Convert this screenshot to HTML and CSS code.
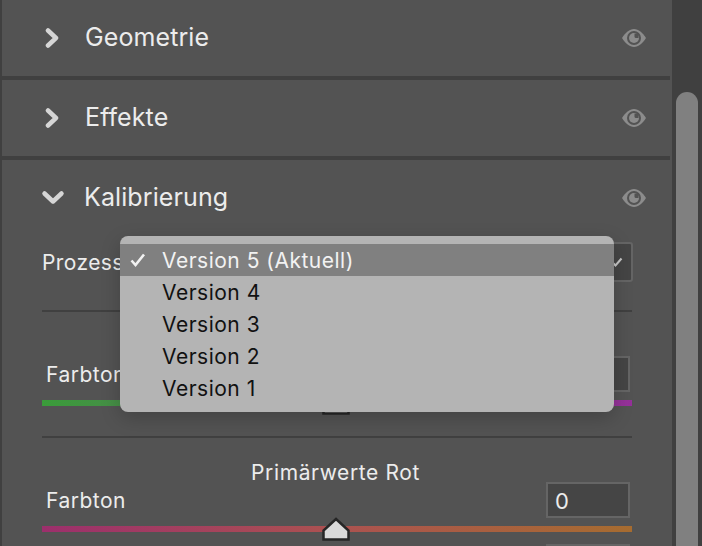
FILE: index.html
```html
<!DOCTYPE html>
<html lang="de">
<head>
<meta charset="utf-8">
<title>Kalibrierung</title>
<link rel="stylesheet" href="styles.css">
</head>
<body>
<div class="app">
  <main class="panel">
    <section class="section">
      <header class="head">
        <svg class="chev" width="16" height="22" viewBox="0 0 16 22"><path d="M3 3.5 11 11 3 18.5"/></svg>
        <h2 class="title">Geometrie</h2>
        <svg class="eye" width="26" height="20" viewBox="0 0 26 20"><use href="#eye"/></svg>
      </header>
    </section>
    <section class="section">
      <header class="head">
        <svg class="chev" width="16" height="22" viewBox="0 0 16 22"><path d="M3 3.5 11 11 3 18.5"/></svg>
        <h2 class="title">Effekte</h2>
        <svg class="eye" width="26" height="20" viewBox="0 0 26 20"><use href="#eye"/></svg>
      </header>
    </section>
    <section class="section open">
      <header class="head">
        <svg class="chev down" width="24" height="16" viewBox="0 0 24 16"><path d="M3.5 3.5 12 11.5 20.5 3.5"/></svg>
        <h2 class="title">Kalibrierung</h2>
        <svg class="eye" width="26" height="20" viewBox="0 0 26 20"><use href="#eye"/></svg>
      </header>
      <div class="body">
        <div class="process">
          <span class="label">Prozess</span>
          <div class="select"><svg width="12" height="10" viewBox="0 0 12 10"><path d="M1.5 5.5 4.5 8.5 10.5 1.5"/></svg></div>
        </div>
        <div class="group">
          <div class="group-title">Schatten</div>
          <div class="row"><span class="row-label">Farbton</span><span class="input">0</span></div>
          <div class="slider shadow-track"><svg class="thumb" width="28" height="24" viewBox="0 0 28 24"><use href="#thumb"/></svg></div>
        </div>
        <div class="group">
          <div class="group-title">Primärwerte Rot</div>
          <div class="row"><span class="row-label">Farbton</span><span class="input">0</span></div>
          <div class="slider red-track"><svg class="thumb" width="28" height="24" viewBox="0 0 28 24"><use href="#thumb"/></svg></div>
          <div class="row next"><span class="row-label"></span><span class="input"></span></div>
        </div>
      </div>
    </section>
  </main>
  <aside class="track"><div class="scroll-thumb"></div></aside>
</div>

<ul class="menu">
  <li class="item active"><svg class="tick" width="18" height="16" viewBox="0 0 18 16"><path d="M2.5 8.5 6.5 13 15 2.5"/></svg>Version 5 (Aktuell)</li>
  <li class="item">Version 4</li>
  <li class="item">Version 3</li>
  <li class="item">Version 2</li>
  <li class="item">Version 1</li>
</ul>

<svg class="defs" width="0" height="0" aria-hidden="true">
  <defs>
    <g id="eye">
      <path class="eye-lens" d="M1 10C4.500 4.500 8.500 1 13 1s8.500 3.500 12 9c-3.500 5.500-7.500 9-12 9S4.500 15.500 1 10Z"/>
      <circle class="eye-dark" cx="13" cy="10" r="7"/>
      <circle class="eye-lens" cx="13" cy="10" r="5"/>
      <path class="eye-dark" d="M13.500 5.500h4v4.500h-2.500a1.500 1.500 0 0 1-1.500-1.500Z"/>
    </g>
    <path id="thumb" class="thumb-shape" d="M14 2 26.500 13.500V22.500H1.500V13.500Z"/>
  </defs>
</svg>
</body>
</html>
```
FILE: styles.css
```css
* { box-sizing: border-box; }
html, body { margin: 0; height: 546px; overflow: hidden; }
body {
  position: relative;
  background: #404040;
  font-family: Inter, "Liberation Sans", sans-serif;
  color: #ececec;
}
.app { display: flex; height: 546px; overflow: hidden; }
.panel {
  height: 546px;
  margin-left: 2px;
  flex: none;
  width: 670px;
  background: #535353;
  overflow: hidden;
}
.section { margin-right: 2px; border-bottom: 4px solid #404040; height: 80px; }
.section.open { border-bottom: 0; height: auto; }
.head { display: flex; align-items: center; height: 76px; position: relative; }
.chev { margin-left: 43px; width: 16px; flex: none; }
.chev.down { margin-left: 39px; width: 24px; margin-right: -5px; }
.chev path { fill: none; stroke: #d6d6d6; stroke-width: 4.500; stroke-linecap: round; stroke-linejoin: round; }
.title { margin: 0 0 2px 24px; font-size: 25px; line-height: 30px; letter-spacing: 0.1px; font-weight: 400; color: #ececec; flex: 1; }
.eye { margin-right: 23px; flex: none; }
.eye-lens { fill: #8c8c8c; }
.eye-dark { fill: #535353; }
.body { padding: 0 38px 0 40px; }
.process { display: flex; align-items: center; justify-content: space-between; height: 42px; margin-top: 5px; }
.label { font-size: 21px; letter-spacing: 0.4px; }
.select {
  width: 120px;
  height: 40px;
  margin-right: -1px;
  display: flex;
  align-items: center;
  justify-content: flex-end;
  padding-right: 8px;
  background: #454545;
  border: 2px solid #656565;
  border-radius: 3px;
}
.select path { fill: none; stroke: #c8c8c8; stroke-width: 2; }
.group { padding-top: 21px; height: 126px; border-top: 2px solid #404040; }
.process + .group { margin-top: 27px; }
.group-title { text-align: center; font-size: 21px; line-height: 28px; letter-spacing: 0.6px; height: 28px; margin-left: -3px; }
.row { display: flex; align-items: center; justify-content: space-between; padding: 0 2px 0 4px; height: 36px; margin-top: -5px; }
.row-label { font-size: 21px; letter-spacing: 0.5px; }
.input {
  width: 84px;
  height: 36px;
  padding-left: 7px;
  background: #454545;
  border: 2px solid #656565;
  font-size: 22px;
  line-height: 34px;
}
.slider { position: relative; height: 6px; margin-top: 8px; }
.shadow-track { background: linear-gradient(90deg, #3a9c3a, #96309a); }
.red-track { background: linear-gradient(90deg, #9c2f6c 0%, #ac5250 50%, #a66c30 100%); }
.thumb { position: absolute; left: 280px; top: -9px; }
.thumb-shape { fill: #d9d9d9; stroke: #262626; stroke-width: 2.500; stroke-linejoin: miter; }
.row.next { margin-top: 12px; }
.track { flex: 1; padding: 92px 4px 0; }
.scroll-thumb { height: 460px; border-radius: 11px 11px 0 0; background: #808080; }
.menu {
  position: absolute;
  left: 120px;
  top: 236px;
  width: 494px;
  height: 176px;
  margin: 0;
  padding: 8px 0;
  list-style: none;
  background: #b4b4b4;
  border-radius: 8px;
  box-shadow: 0 6px 20px rgba(0, 0, 0, 0.2);
  color: #111;
  font-size: 21px;
}
.item { position: relative; height: 32px; line-height: 34px; padding-left: 42px; letter-spacing: 0.5px; }
.item.active { background: #808080; color: #f2f2f2; }
.tick { position: absolute; left: 9px; top: 8px; }
.tick path { fill: none; stroke: #f2f2f2; stroke-width: 2.600; }
.defs { position: absolute; }
```
